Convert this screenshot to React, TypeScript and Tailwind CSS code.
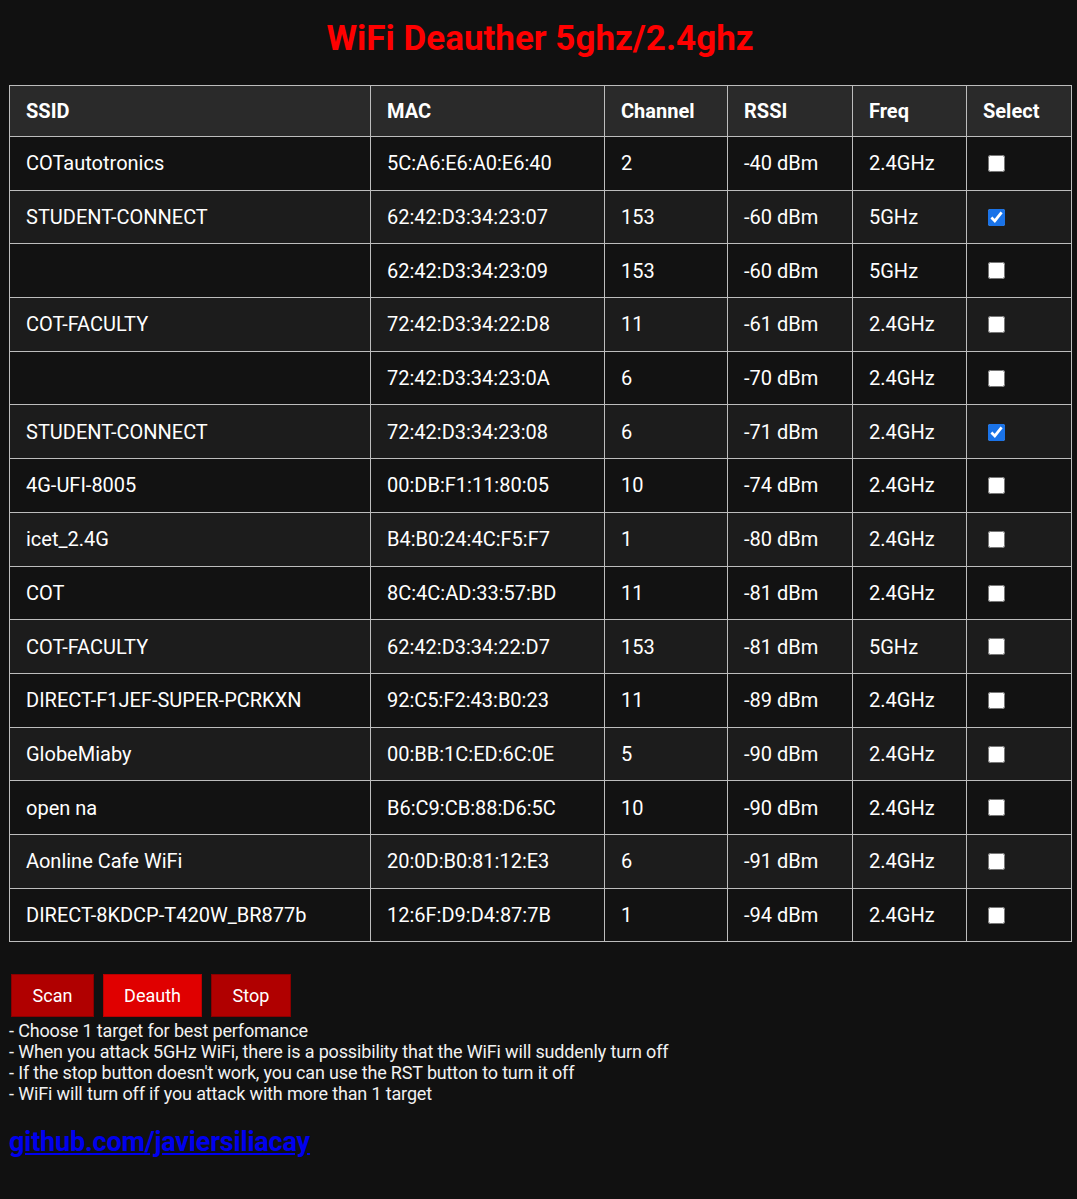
import React from "react";

const networks = [
  { ssid: "COTautotronics", mac: "5C:A6:E6:A0:E6:40", ch: "2", rssi: "-40 dBm", freq: "2.4GHz", sel: false },
  { ssid: "STUDENT-CONNECT", mac: "62:42:D3:34:23:07", ch: "153", rssi: "-60 dBm", freq: "5GHz", sel: true },
  { ssid: "", mac: "62:42:D3:34:23:09", ch: "153", rssi: "-60 dBm", freq: "5GHz", sel: false },
  { ssid: "COT-FACULTY", mac: "72:42:D3:34:22:D8", ch: "11", rssi: "-61 dBm", freq: "2.4GHz", sel: false },
  { ssid: "", mac: "72:42:D3:34:23:0A", ch: "6", rssi: "-70 dBm", freq: "2.4GHz", sel: false },
  { ssid: "STUDENT-CONNECT", mac: "72:42:D3:34:23:08", ch: "6", rssi: "-71 dBm", freq: "2.4GHz", sel: true },
  { ssid: "4G-UFI-8005", mac: "00:DB:F1:11:80:05", ch: "10", rssi: "-74 dBm", freq: "2.4GHz", sel: false },
  { ssid: "icet_2.4G", mac: "B4:B0:24:4C:F5:F7", ch: "1", rssi: "-80 dBm", freq: "2.4GHz", sel: false },
  { ssid: "COT", mac: "8C:4C:AD:33:57:BD", ch: "11", rssi: "-81 dBm", freq: "2.4GHz", sel: false },
  { ssid: "COT-FACULTY", mac: "62:42:D3:34:22:D7", ch: "153", rssi: "-81 dBm", freq: "5GHz", sel: false },
  { ssid: "DIRECT-F1JEF-SUPER-PCRKXN", mac: "92:C5:F2:43:B0:23", ch: "11", rssi: "-89 dBm", freq: "2.4GHz", sel: false },
  { ssid: "GlobeMiaby", mac: "00:BB:1C:ED:6C:0E", ch: "5", rssi: "-90 dBm", freq: "2.4GHz", sel: false },
  { ssid: "open na", mac: "B6:C9:CB:88:D6:5C", ch: "10", rssi: "-90 dBm", freq: "2.4GHz", sel: false },
  { ssid: "Aonline Cafe WiFi", mac: "20:0D:B0:81:12:E3", ch: "6", rssi: "-91 dBm", freq: "2.4GHz", sel: false },
  { ssid: "DIRECT-8KDCP-T420W_BR877b", mac: "12:6F:D9:D4:87:7B", ch: "1", rssi: "-94 dBm", freq: "2.4GHz", sel: false },
];

const notes = [
  "- Choose 1 target for best perfomance",
  "- When you attack 5GHz WiFi, there is a possibility that the WiFi will suddenly turn off",
  "- If the stop button doesn't work, you can use the RST button to turn it off",
  "- WiFi will turn off if you attack with more than 1 target",
];

const cell = "border border-[#bdbdbd] px-4 text-left";

export default function App() {
  return (
    <div className="min-h-[1199px] bg-[#111111] text-white font-['Roboto',sans-serif] pl-[9px] pt-[20px]">
      <h1 className="text-center text-[35px] font-bold text-[#ff0000] leading-[38px] pr-[6px]">
        WiFi Deauther 5ghz/2.4ghz
      </h1>

      <table className="mt-[27px] w-[1062px] border-collapse text-[20px] table-fixed">
        <colgroup>
          <col className="w-[361px]" />
          <col className="w-[234px]" />
          <col className="w-[123px]" />
          <col className="w-[125px]" />
          <col className="w-[114px]" />
          <col className="w-[105px]" />
        </colgroup>
        <thead>
          <tr className="bg-[#2a2a2a] h-[51px]">
            {["SSID", "MAC", "Channel", "RSSI", "Freq", "Select"].map((h) => (
              <th key={h} className={`${cell} font-bold`}>
                {h}
              </th>
            ))}
          </tr>
        </thead>
        <tbody>
          {networks.map((n, i) => (
            <tr key={i} className={`h-[53.7px] ${i % 2 === 1 ? "bg-[#1c1c1c]" : "bg-[#121212]"}`}>
              <td className={cell}>{n.ssid}</td>
              <td className={cell}>{n.mac}</td>
              <td className={cell}>{n.ch}</td>
              <td className={cell}>{n.rssi}</td>
              <td className={cell}>{n.freq}</td>
              <td className={cell}>
                <input
                  type="checkbox"
                  defaultChecked={n.sel}
                  className="ml-[5px] mb-[3px] w-[17px] h-[17px] align-middle accent-[#1a73e8]"
                />
              </td>
            </tr>
          ))}
        </tbody>
      </table>

      <div className="mt-[32px] flex gap-[9px] pl-[2px]">
        <button className="h-[43px] w-[83px] bg-[#b00000] border border-[#8a0000] text-[18px] text-white">
          Scan
        </button>
        <button className="h-[43px] w-[99px] bg-[#e00000] border border-[#b80000] text-[18px] text-white">
          Deauth
        </button>
        <button className="h-[43px] w-[80px] bg-[#b00000] border border-[#8a0000] text-[18px] text-white">
          Stop
        </button>
      </div>

      <div className="mt-[3px] text-[18px] leading-[21px] tracking-[-0.15px] text-[#f2f2f2]">
        {notes.map((t) => (
          <div key={t}>{t}</div>
        ))}
      </div>

      <a href="#" className="mt-[23px] inline-block text-[27px] leading-[30px] font-bold tracking-[-0.2px] text-[#0000ee] underline">
        github.com/javiersiliacay
      </a>
    </div>
  );
}
